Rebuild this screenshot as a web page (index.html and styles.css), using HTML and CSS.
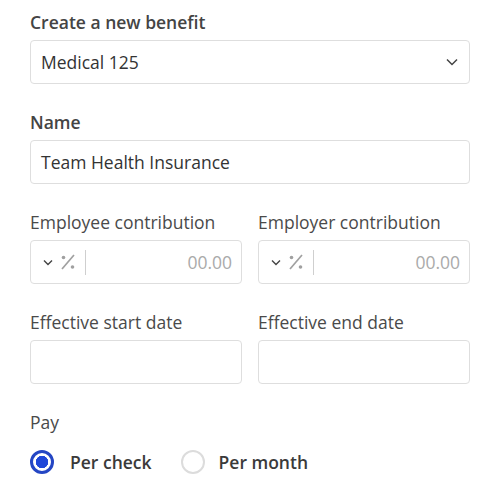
FILE: index.html
```html
<!DOCTYPE html>
<html>
<head>
<meta charset="utf-8">
<link rel="stylesheet" href="styles.css">
</head>
<body>
<form class="form">
  <div class="field">
    <div class="label strong">Create a new benefit</div>
    <div class="box select">
      <span class="value">Medical 125</span>
      <svg class="chev-lg" width="12" height="8" viewBox="0 0 12 8"><path d="M1 1.5l5 5 5-5" fill="none" stroke="#444" stroke-width="1.5"/></svg>
    </div>
  </div>
  <div class="field">
    <div class="label strong">Name</div>
    <div class="box"><span class="value">Team Health Insurance</span></div>
  </div>
  <div class="row">
    <div class="field">
      <div class="label">Employee contribution</div>
      <div class="box amount">
        <svg class="chev-sm" width="10" height="7" viewBox="0 0 10 7"><path d="M1 1.5l4 4 4-4" fill="none" stroke="#444" stroke-width="1.4"/></svg>
        <svg class="pct" width="16" height="16" viewBox="0 0 16 16"><path d="M2 15L14 1" stroke="#a0a0a0" stroke-width="1.7"/><circle cx="3.5" cy="3.5" r="1.8" fill="#a0a0a0"/><circle cx="12.5" cy="13" r="1.8" fill="#a0a0a0"/></svg>
        <span class="divider"></span>
        <span class="placeholder">00.00</span>
      </div>
    </div>
    <div class="field">
      <div class="label">Employer contribution</div>
      <div class="box amount">
        <svg class="chev-sm" width="10" height="7" viewBox="0 0 10 7"><path d="M1 1.5l4 4 4-4" fill="none" stroke="#444" stroke-width="1.4"/></svg>
        <svg class="pct" width="16" height="16" viewBox="0 0 16 16"><path d="M2 15L14 1" stroke="#a0a0a0" stroke-width="1.7"/><circle cx="3.5" cy="3.5" r="1.8" fill="#a0a0a0"/><circle cx="12.5" cy="13" r="1.8" fill="#a0a0a0"/></svg>
        <span class="divider"></span>
        <span class="placeholder">00.00</span>
      </div>
    </div>
  </div>
  <div class="row">
    <div class="field">
      <div class="label">Effective start date</div>
      <div class="box"></div>
    </div>
    <div class="field">
      <div class="label">Effective end date</div>
      <div class="box"></div>
    </div>
  </div>
  <div class="field">
    <div class="label">Pay</div>
    <div class="radios">
      <label class="radio"><span class="dot checked"></span><span class="rtext">Per check</span></label>
      <label class="radio"><span class="dot"></span><span class="rtext">Per month</span></label>
    </div>
  </div>
</form>
</body>
</html>
```
FILE: styles.css
```css
html, body {
  margin: 0;
  padding: 0;
  background: #fff;
}
body {
  font-family: "Open Sans", "Noto Sans", sans-serif;
  color: #333;
}
.form {
  padding: 10px 30px 0 30px;
  width: 440px;
}
.field {
  margin-bottom: 26px;
  flex: 1;
  min-width: 0;
}
.row {
  display: flex;
  gap: 16px;
}
.label {
  font-size: 17.5px;
  line-height: 24px;
  color: #4a4a4a;
  margin-bottom: 6px;
}
.label.strong {
  font-weight: 600;
  color: #444;
}
.box {
  box-sizing: border-box;
  height: 44px;
  border: 1px solid #dedede;
  border-radius: 4px;
  display: flex;
  align-items: center;
  padding: 0 10px;
  font-size: 17.5px;
  color: #333;
}
.select {
  justify-content: space-between;
  padding-right: 11px;
}
.chev-lg {
  display: block;
}
.amount {
  padding: 0 9px 0 12px;
}
.chev-sm {
  display: block;
  margin-right: 7px;
}
.pct {
  display: block;
  margin-right: 9px;
}
.divider {
  width: 1px;
  height: 25px;
  background: #cfcfcf;
}
.placeholder {
  margin-left: auto;
  color: #aaa;
}
.radios {
  display: flex;
  align-items: center;
  gap: 29px;
  margin-top: 16px;
}
.radio {
  display: flex;
  align-items: center;
  gap: 14px;
}
.radio:first-child {
  gap: 16px;
}
.dot {
  box-sizing: border-box;
  width: 24px;
  height: 24px;
  border-radius: 50%;
  border: 2px solid #dcdcdc;
  background: #fff;
}
.dot.checked {
  border: 3px solid #2446c4;
  background: radial-gradient(circle, #1f47d8 0 6px, #fff 6.5px);
}
.rtext {
  font-size: 17.5px;
  font-weight: 600;
  color: #3a3a3a;
  line-height: 24px;
}
```
